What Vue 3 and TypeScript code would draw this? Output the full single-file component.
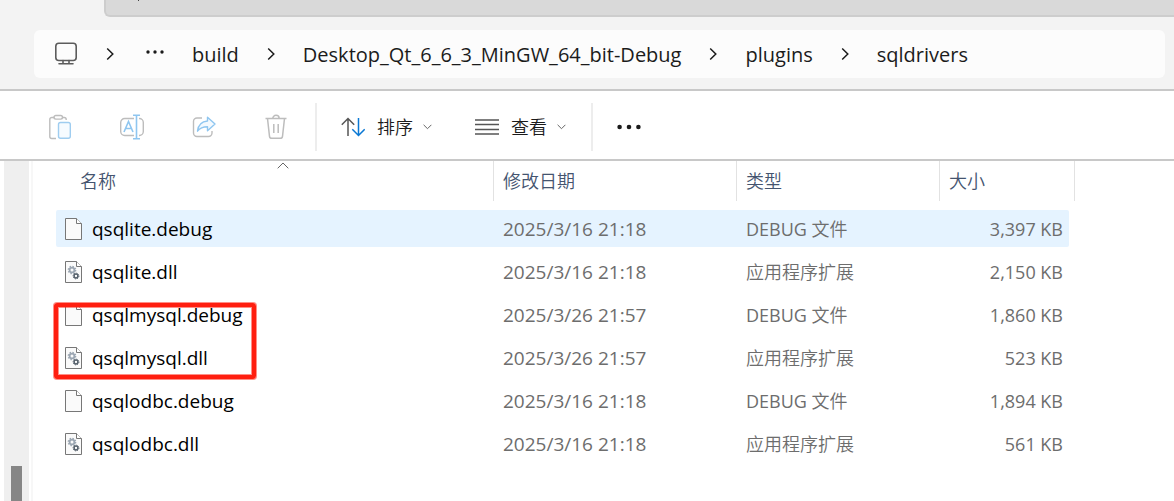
<script setup lang="ts">
interface FileRow {
  name: string
  library: boolean
  date: string
  size: string
}

const folders: string[] = ['build', 'Desktop_Qt_6_6_3_MinGW_64_bit-Debug', 'plugins', 'sqldrivers']

const files: FileRow[] = [
  { name: 'qsqlite.debug', library: false, date: '2025/3/16 21:18', size: '3,397 KB' },
  { name: 'qsqlite.dll', library: true, date: '2025/3/16 21:18', size: '2,150 KB' },
  { name: 'qsqlmysql.debug', library: false, date: '2025/3/26 21:57', size: '1,860 KB' },
  { name: 'qsqlmysql.dll', library: true, date: '2025/3/26 21:57', size: '523 KB' },
  { name: 'qsqlodbc.debug', library: false, date: '2025/3/16 21:18', size: '1,894 KB' },
  { name: 'qsqlodbc.dll', library: true, date: '2025/3/16 21:18', size: '561 KB' },
]
</script>

<template>
  <div class="explorer">
    <header class="top">
      <div class="strip"></div>
      <nav class="address">
        <a href="#" class="crumb pc" aria-label="PC">
          <svg width="24" height="24" viewBox="0 0 24 24" fill="none" stroke="#5c5c5c" stroke-width="1.6">
            <rect x="1.8" y="1.3" width="20.4" height="17.2" rx="3" />
            <path d="M9 18.5v3M15 18.5v3M5 21.8h14" stroke-linecap="round" />
          </svg>
        </a>
        <svg class="chev" width="8" height="14" viewBox="0 0 8 14"><path d="M1.2 1.5 6.8 7l-5.6 5.5" /></svg>
        <button class="more" aria-label="More folders">
          <svg width="18" height="4" viewBox="0 0 18 4" fill="#1b1b1b">
            <circle cx="2" cy="2" r="1.7" /><circle cx="9" cy="2" r="1.7" /><circle cx="16" cy="2" r="1.7" />
          </svg>
        </button>
        <template v-for="(folder, i) in folders" :key="folder">
          <svg v-if="i > 0" class="chev" width="8" height="14" viewBox="0 0 8 14"><path d="M1.2 1.5 6.8 7l-5.6 5.5" /></svg>
          <a href="#" class="crumb">{{ folder }}</a>
        </template>
      </nav>
    </header>

    <div class="toolbar">
      <div class="group edit">
        <button aria-label="Paste" disabled>
          <svg width="24" height="26" viewBox="0 0 24 26" fill="none" stroke="#bdbdbd" stroke-width="1.4">
            <path d="M6.5 3.5H3.800a2 2 0 0 0-2 2v17a2 2 0 0 0 2 2H8M14.500 3.500h1.700a2 2 0 0 1 2 2V6" />
            <rect x="6" y="1.500" width="8.500" height="3.600" rx="1.800" />
            <rect x="10.500" y="8.500" width="11.800" height="15.800" rx="2" stroke="#9fcdf0" fill="#f6fbff" />
          </svg>
        </button>
        <button aria-label="Rename" disabled>
          <svg width="24" height="26" viewBox="0 0 24 26" fill="none" stroke="#bdbdbd" stroke-width="1.400">
            <path d="M14 4.500H4.700a4 4 0 0 0-4 4v9a4 4 0 0 0 4 4H14M19 4.500h.3a4 4 0 0 1 4 4v9a4 4 0 0 1-4 4H19" />
            <path d="M13 1.200h7M13 24.800h7M16.500 1.200v23.600M4 18l4.500-10.500L13 18M5.500 14.500h6" stroke="#8fc6f0" stroke-width="1.600" />
          </svg>
        </button>
        <button aria-label="Share" disabled>
          <svg width="24" height="26" viewBox="0 0 24 26" fill="none" stroke="#bdbdbd" stroke-width="1.400" stroke-linejoin="round">
            <path d="M10 4H5a3.500 3.500 0 0 0-3.500 3.500V19A3.500 3.500 0 0 0 5 22.500h11.500A3.500 3.500 0 0 0 20 19v-2" />
            <path d="M15.500 3.200 23 10l-7.500 6.800v-4c-4 0-7.500 1-10 4.400.6-5.500 4-9.700 10-10.200z" stroke="#8fc6f0" fill="#f3f9fe" />
          </svg>
        </button>
        <button aria-label="Delete" disabled>
          <svg width="24" height="26" viewBox="0 0 24 26" fill="none" stroke="#bdbdbd" stroke-width="1.500">
            <path d="M1.500 4.500h21M8.800 4.500a3.200 3.200 0 0 1 6.400 0M3.500 4.500l2 17.800a2.300 2.300 0 0 0 2.300 2h8.400a2.300 2.300 0 0 0 2.300-2l2-17.800M9.800 10v9M14.200 10v9" />
          </svg>
        </button>
      </div>
      <div class="group menus">
        <button class="menu">
          <svg width="24" height="20" viewBox="0 0 24 20" fill="none" stroke-width="1.500">
            <path d="M7 19V1.500M.8 7.800 7 1.500l6.200 6.300" stroke="#555" />
            <path d="M17.500 1v17.500M11.300 12.200l6.200 6.300 6.200-6.300" stroke="#0a78d4" />
          </svg>
          <span>排序</span>
          <svg class="drop" width="9" height="6" viewBox="0 0 9 6"><path d="M.6.8 4.500 4.700 8.400.8" /></svg>
        </button>
        <button class="menu">
          <svg width="24" height="16" viewBox="0 0 24 16" stroke="#555" stroke-width="1.300">
            <path d="M0 1h24M0 5.500h24M0 10.500h24M0 15h24" />
          </svg>
          <span>查看</span>
          <svg class="drop" width="9" height="6" viewBox="0 0 9 6"><path d="M.6.8 4.500 4.700 8.400.8" /></svg>
        </button>
      </div>
      <button class="overflow" aria-label="See more">
        <svg width="24" height="6" viewBox="0 0 24 6" fill="#1b1b1b">
          <circle cx="2.600" cy="3" r="2.300" /><circle cx="12" cy="3" r="2.300" /><circle cx="21.400" cy="3" r="2.300" />
        </svg>
      </button>
    </div>

    <main class="body">
      <div class="scrollbar"><div class="thumb"></div></div>
      <div class="listing">
        <table>
          <colgroup>
            <col />
            <col class="c-date" />
            <col class="c-type" />
            <col class="c-size" />
          </colgroup>
          <thead>
            <tr>
              <th class="first">
                <button>
                  名称
                  <svg class="sorted" width="12" height="7" viewBox="0 0 12 7"><path d="M.7 6.300 6 1l5.300 5.300" /></svg>
                </button>
              </th>
              <th><button>修改日期</button></th>
              <th><button>类型</button></th>
              <th><button>大小</button></th>
            </tr>
          </thead>
          <tbody>
            <tr v-for="(file, i) in files" :key="file.name" :class="{ hovered: i === 0 }">
              <td class="name">
                <div class="file">
                  <svg width="17" height="22" viewBox="0 0 17 22">
                    <path d="M.5.5h11l5 5v16H.5z" fill="#fafafa" stroke="#777" />
                    <path d="M11.500.5v5h5" fill="#fff" stroke="#777" />
                    <template v-if="file.library">
                      <circle cx="7" cy="9" r="2.400" fill="none" stroke="#9ba6b2" stroke-width="1.800" />
                      <circle cx="7" cy="9" r="3.700" fill="none" stroke="#9ba6b2" stroke-width="1.300" stroke-dasharray="1.500 1.400" />
                      <circle cx="11" cy="15" r="1.900" fill="#fff" stroke="#56616c" stroke-width="1.500" />
                      <circle cx="11" cy="15" r="2.900" fill="none" stroke="#56616c" stroke-width="1" stroke-dasharray="1.200 1.080" />
                    </template>
                  </svg>
                  <span>{{ file.name }}</span>
                </div>
              </td>
              <td class="date">{{ file.date }}</td>
              <td v-if="file.library">应用程序扩展</td>
              <td v-else><span class="ext">DEBUG</span> 文件</td>
              <td class="size">{{ file.size }}</td>
            </tr>
          </tbody>
        </table>
        <div class="marker"></div>
      </div>
    </main>
  </div>
</template>

<style>
body {
  margin: 0;
}
</style>

<style scoped>
.explorer {
  display: flex;
  flex-direction: column;
  min-height: 100vh;
  background: #fff;
  color: #1b1b1b;
  font-family: "Open Sans", "Noto Sans CJK SC", sans-serif;
  font-size: 18px;
}

button {
  padding: 0;
  border: 0;
  background: none;
  color: inherit;
  font: inherit;
}

svg {
  display: block;
  flex: none;
}

.top {
  padding-bottom: 11px;
  border-bottom: 2px solid #c8c8c8;
  background: #f3f3f3;
}

.strip {
  box-sizing: border-box;
  height: 17px;
  margin-left: 104px;
  border-bottom: 2px solid #cdcdcd;
  border-left: 2px solid #cdcdcd;
  border-bottom-left-radius: 6px;
  background: #d9d9d9;
}

.strip::before {
  content: "";
  display: block;
  width: 1px;
  height: 1px;
  margin-left: 32px;
  background: #444;
}

.address {
  display: flex;
  align-items: center;
  gap: 28px;
  height: 48px;
  margin: 13px 9px 0 34px;
  padding-left: 20px;
  border-radius: 6px;
  background: #fcfcfc;
  font-size: 20px;
}

.crumb {
  color: inherit;
  text-decoration: none;
}

.chev path {
  fill: none;
  stroke: #1b1b1b;
  stroke-width: 1.5;
}

.more {
  padding: 0 0 4px 4px;
}

.toolbar {
  display: flex;
  align-items: center;
  height: 68px;
  border-bottom: 2px solid #c8c8c8;
}

.group {
  display: flex;
  align-items: center;
  height: 48px;
  margin-top: 4px;
  border-right: 2px solid #ededed;
}

.edit {
  gap: 48px;
  padding-left: 48px;
  padding-right: 27px;
}

.menus {
  gap: 43px;
  padding-left: 24px;
  padding-right: 25px;
}

.menu {
  display: flex;
  align-items: center;
  gap: 12px;
  line-height: 24px;
  font-weight: 350;
}

.drop {
  margin-left: -2px;
}

.drop path,
.sorted path {
  fill: none;
  stroke: #666;
}

.overflow {
  margin-left: 24px;
  padding-top: 4px;
}

.body {
  display: flex;
  flex: 1;
}

.scrollbar {
  display: flex;
  justify-content: center;
  width: 25px;
  margin-left: 4px;
  background: #efefef;
}

.thumb {
  width: 11px;
  margin-top: 305px;
  background: #868686;
}

.listing {
  position: relative;
  flex: 1;
  margin-left: 2px;
  padding-right: 99px;
  padding-left: 23px;
  border-left: 2px solid #f7f7f7;
}

table {
  width: 100%;
  table-layout: fixed;
  border-spacing: 0;
}

.c-date {
  width: 243px;
}

.c-type {
  width: 203px;
}

.c-size {
  width: 135px;
}

th {
  height: 46px;
  padding: 0;
  vertical-align: top;
}

th.first {
  padding-left: 15px;
}

th button {
  position: relative;
  width: 100%;
  height: 40px;
  padding-bottom: 2px;
  padding-left: 9px;
  border-right: 1px solid #e2e2e2;
  color: #44546f;
  font-weight: 350;
  text-align: left;
}

.sorted {
  position: absolute;
  top: 1px;
  left: calc(50% - 5px);
}

td {
  box-sizing: border-box;
  height: 43px;
  padding: 0 9px;
  border: 0 solid transparent;
  border-width: 3px 0;
  background-clip: padding-box;
  color: #6d6d6d;
  line-height: 24px;
  font-weight: 350;
  white-space: nowrap;
}

.hovered td {
  background-color: #e5f3ff;
}

td.name {
  border-radius: 2px 0 0 2px / 5px 0 0 5px;
  color: #000;
  font-size: 19px;
  font-weight: 400;
}

td.date {
  font-size: 19px;
  font-weight: 400;
}

.ext {
  font-weight: 400;
}

td.size {
  padding-right: 6px;
  border-right-width: 6px;
  border-radius: 0 8px 8px 0 / 0 5px 5px 0;
  font-weight: 400;
  text-align: right;
}

.file {
  display: flex;
  align-items: center;
  gap: 10px;
}

.marker {
  position: absolute;
  top: 142px;
  left: 21px;
  box-sizing: border-box;
  width: 202px;
  height: 76px;
  border: 4px solid #ff1f10;
  border-radius: 3px;
  box-shadow: 0 0 0 1px #ff1f1080, inset 0 0 0 1px #ff1f1080;
}
</style>
